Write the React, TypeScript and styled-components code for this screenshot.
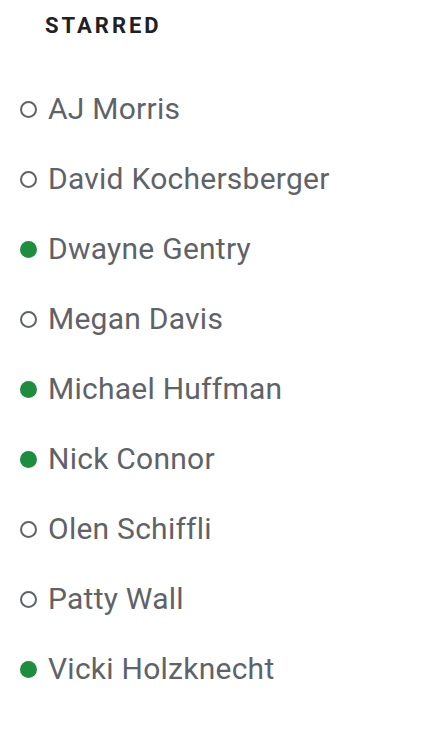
import React from 'react'
import styled, { createGlobalStyle } from 'styled-components'

interface Contact {
    name: string
    online: boolean
}

const contacts: Contact[] = [
    { name: 'AJ Morris', online: false },
    { name: 'David Kochersberger', online: false },
    { name: 'Dwayne Gentry', online: true },
    { name: 'Megan Davis', online: false },
    { name: 'Michael Huffman', online: true },
    { name: 'Nick Connor', online: true },
    { name: 'Olen Schiffli', online: false },
    { name: 'Patty Wall', online: false },
    { name: 'Vicki Holzknecht', online: true },
]

const GlobalStyle = createGlobalStyle`
    body {
        margin: 0;
        background: #ffffff;
        font-family: Roboto, 'Liberation Sans', sans-serif;
    }
`

const Panel = styled.section`
    width: 440px;
    height: 730px;
    box-sizing: border-box;
    padding: 11px 0 0 20px;
    display: flex;
    flex-direction: column;
`

const Heading = styled.h2`
    margin: 0 0 0 25px;
    height: 30px;
    line-height: 30px;
    font-size: 22px;
    font-weight: 700;
    letter-spacing: 3px;
    color: #202124;
`

const List = styled.ul`
    list-style: none;
    margin: 33px 0 0;
    padding: 0;
    display: flex;
    flex-direction: column;
`

const Row = styled.li`
    height: 70px;
    display: flex;
    align-items: center;
    gap: 11px;
`

const Status = styled.span<{ $online: boolean }>`
    width: 17px;
    height: 17px;
    box-sizing: border-box;
    border-radius: 50%;
    flex-shrink: 0;
    background: ${p => (p.$online ? '#1e8e3e' : 'transparent')};
    border: ${p => (p.$online ? 'none' : '2.5px solid #5f6368')};
`

const Name = styled.span`
    font-size: 30px;
    letter-spacing: 0.25px;
    color: #5f6368;
    line-height: 1;
`

const App: React.FC = () => (
    <>
        <GlobalStyle />
        <Panel>
            <Heading>STARRED</Heading>
            <List>
                {contacts.map(c => (
                    <Row key={c.name}>
                        <Status $online={c.online} />
                        <Name>{c.name}</Name>
                    </Row>
                ))}
            </List>
        </Panel>
    </>
)

export default App
